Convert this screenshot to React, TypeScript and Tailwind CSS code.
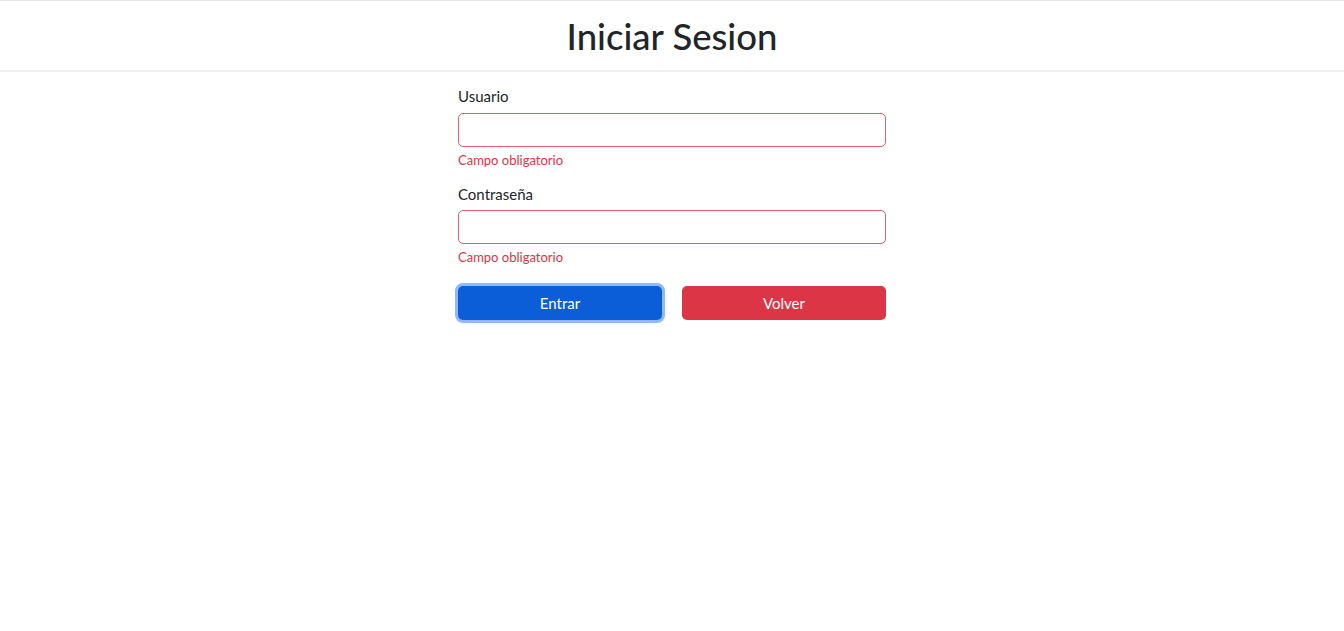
export default function App() {
  return (
    <div className="min-h-screen bg-white font-['Lato',sans-serif] text-[#212529]">
      <header className="flex h-[72px] items-center justify-center border-t border-b-2 border-t-[#e6e6e6] border-b-[#f0f0f0]">
        <h1 className="mt-[2px] text-[36.5px] font-medium leading-tight">Iniciar Sesion</h1>
      </header>

      <form className="mx-auto w-[428px] pt-[12px]" onSubmit={(e) => e.preventDefault()}>
        <div className="mb-[11px]">
          <label className="mb-[5px] block text-[15px] leading-6">Usuario</label>
          <input
            type="text"
            className="block h-[34px] w-full rounded-[5px] border border-[#e4606d] px-3 text-[15px] outline-none"
          />
          <p className="mt-[3px] text-[13px] leading-[21px] text-[#dc3545]">Campo obligatorio</p>
        </div>

        <div className="mb-[18px]">
          <label className="mb-[4px] block text-[15px] leading-6">Contraseña</label>
          <input
            type="password"
            className="block h-[34px] w-full rounded-[5px] border border-[#e4606d] px-3 text-[15px] outline-none"
          />
          <p className="mt-[3px] text-[13px] leading-[21px] text-[#dc3545]">Campo obligatorio</p>
        </div>

        <div className="grid grid-cols-2 gap-5">
          <button
            type="submit"
            className="h-[34px] rounded-[5px] bg-[#0b5ed7] text-[15px] text-white ring-[3px] ring-[#8fb8fd]"
          >
            Entrar
          </button>
          <button type="button" className="h-[34px] rounded-[5px] bg-[#dc3545] text-[15px] text-white">
            Volver
          </button>
        </div>
      </form>
    </div>
  );
}
